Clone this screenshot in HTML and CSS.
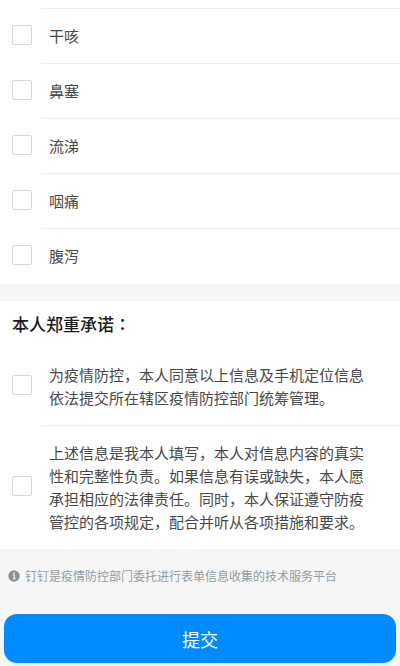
FILE: index.html
```html
<!DOCTYPE html>
<html lang="zh-CN">
<head>
    <meta charset="UTF-8">
    <meta name="viewport" content="width=device-width, initial-scale=1.0">
    <title>本人郑重承诺</title>
    <link rel="stylesheet" href="styles.css">
</head>
<body>
    <form action="#" method="post">
        <div class="card symptoms">
            <label class="option">
                <input type="checkbox" name="symptom" value="cough">
                <span class="text">干咳</span>
            </label>
            <label class="option">
                <input type="checkbox" name="symptom" value="nose">
                <span class="text">鼻塞</span>
            </label>
            <label class="option">
                <input type="checkbox" name="symptom" value="runny">
                <span class="text">流涕</span>
            </label>
            <label class="option">
                <input type="checkbox" name="symptom" value="throat">
                <span class="text">咽痛</span>
            </label>
            <label class="option">
                <input type="checkbox" name="symptom" value="diarrhea">
                <span class="text">腹泻</span>
            </label>
        </div>

        <div class="card promise">
            <h2>本人郑重承诺<span class="colon" lang="zh-TW">：</span></h2>
            <label class="option">
                <input type="checkbox" name="promise" value="share">
                <span class="text">为疫情防控，本人同意以上信息及手机定位信息依法提交所在辖区疫情防控部门统筹管理。</span>
            </label>
            <label class="option">
                <input type="checkbox" name="promise" value="truth">
                <span class="text">上述信息是我本人填写，本人对信息内容的真实性和完整性负责。如果信息有误或缺失，本人愿承担相应的法律责任。同时，本人保证遵守防疫管控的各项规定，配合并听从各项措施和要求。</span>
            </label>
        </div>

        <p class="notice">
            <svg width="12" height="12" viewBox="0 0 12 12" aria-hidden="true">
                <circle cx="6" cy="6" r="5.7" fill="#87909b"/>
                <circle cx="6" cy="3.4" r="0.9" fill="#f6f6f6"/>
                <path d="M4.8 5.3H6.4V8.7M4.6 8.8H7.6" fill="none" stroke="#f6f6f6" stroke-width="1.1"/>
            </svg>
            <span>钉钉是疫情防控部门委托进行表单信息收集的技术服务平台</span>
        </p>

        <div class="footer">
            <button type="submit">提交</button>
        </div>
    </form>
</body>
</html>
```
FILE: styles.css
```css
* {
    box-sizing: border-box;
}

body {
    margin: 0;
    background-color: #f6f6f6;
    color: #484848;
    font-family: "Noto Sans CJK SC", sans-serif;
    font-size: 15px;
    line-height: 23px;
}

.card {
    background-color: #fff;
    margin-bottom: 17px;
}

.symptoms {
    padding: 8px 0 1px;
}

.option {
    display: flex;
    align-items: center;
    padding-left: 12px;
}

.option input {
    appearance: none;
    flex: none;
    width: 20px;
    height: 20px;
    margin: 0 9px 2px 0;
    border: 1px solid #d8d8d8;
    border-radius: 2px;
    background-color: #fff;
}

.option input:checked {
    background-color: #008cff;
    border-color: #008cff;
}

.option .text {
    flex: 1;
    padding: 15px 28px 16px 8px;
    border-top: 1px solid #eee;
}

.promise {
    margin-bottom: 0;
}

.promise h2 {
    margin: 0;
    padding: 11px 12px;
    color: #1c1c1c;
    font-size: 17px;
    font-weight: 500;
    line-height: 24px;
}

.promise .colon {
    font-family: "Noto Sans CJK TC", sans-serif;
}

.promise h2 + .option .text {
    border-top-color: transparent;
}

.notice {
    display: flex;
    align-items: center;
    gap: 5px;
    margin: 0;
    padding: 18px 8px 29px;
    color: #929ba4;
    font-size: 12px;
    line-height: 18px;
}

.footer {
    padding: 0 4px 3px;
}

button {
    display: block;
    width: 100%;
    height: 49px;
    border: none;
    border-radius: 13px;
    background-color: #008cff;
    color: #fff;
    font-family: inherit;
    font-size: 18px;
    cursor: pointer;
}
```
